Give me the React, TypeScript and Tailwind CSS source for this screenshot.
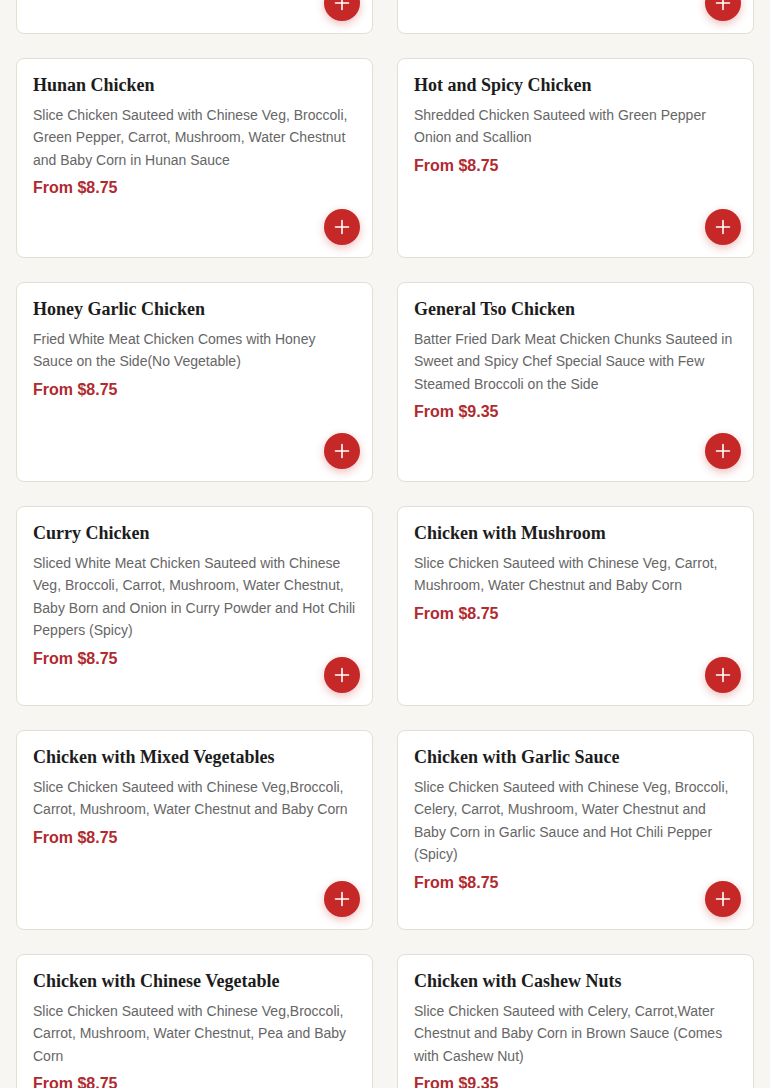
import React from 'react';

type Dish = { name: string; desc: string; price: string };

const dishes: Dish[] = [
  { name: 'Hunan Chicken', desc: 'Slice Chicken Sauteed with Chinese Veg, Broccoli, Green Pepper, Carrot, Mushroom, Water Chestnut and Baby Corn in Hunan Sauce', price: '$8.75' },
  { name: 'Hot and Spicy Chicken', desc: 'Shredded Chicken Sauteed with Green Pepper Onion and Scallion', price: '$8.75' },
  { name: 'Honey Garlic Chicken', desc: 'Fried White Meat Chicken Comes with Honey Sauce on the Side(No Vegetable)', price: '$8.75' },
  { name: 'General Tso Chicken', desc: 'Batter Fried Dark Meat Chicken Chunks Sauteed in Sweet and Spicy Chef Special Sauce with Few Steamed Broccoli on the Side', price: '$9.35' },
  { name: 'Curry Chicken', desc: 'Sliced White Meat Chicken Sauteed with Chinese Veg, Broccoli, Carrot, Mushroom, Water Chestnut, Baby Born and Onion in Curry Powder and Hot Chili Peppers (Spicy)', price: '$8.75' },
  { name: 'Chicken with Mushroom', desc: 'Slice Chicken Sauteed with Chinese Veg, Carrot, Mushroom, Water Chestnut and Baby Corn', price: '$8.75' },
  { name: 'Chicken with Mixed Vegetables', desc: 'Slice Chicken Sauteed with Chinese Veg,Broccoli, Carrot, Mushroom, Water Chestnut and Baby Corn', price: '$8.75' },
  { name: 'Chicken with Garlic Sauce', desc: 'Slice Chicken Sauteed with Chinese Veg, Broccoli, Celery, Carrot, Mushroom, Water Chestnut and Baby Corn in Garlic Sauce and Hot Chili Pepper (Spicy)', price: '$8.75' },
  { name: 'Chicken with Chinese Vegetable', desc: 'Slice Chicken Sauteed with Chinese Veg,Broccoli, Carrot, Mushroom, Water Chestnut, Pea and Baby Corn', price: '$8.75' },
  { name: 'Chicken with Cashew Nuts', desc: 'Slice Chicken Sauteed with Celery, Carrot,Water Chestnut and Baby Corn in Brown Sauce (Comes with Cashew Nut)', price: '$9.35' },
];

function AddButton() {
  return (
    <button
      type="button"
      className="absolute bottom-3 right-3 flex h-9 w-9 items-center justify-center rounded-full bg-[#c62828] text-white shadow-[0_3px_8px_rgba(198,40,40,0.3)]"
    >
      <svg width="16" height="16" viewBox="0 0 16 16" fill="none" stroke="currentColor" strokeWidth="1.6" strokeLinecap="round">
        <path d="M8 1.5v13M1.5 8h13" />
      </svg>
    </button>
  );
}

function DishCard({ dish }: { dish?: Dish }) {
  return (
    <div className="relative h-[200px] rounded-lg border border-[#e6ded2] bg-white px-4 pt-[15px]">
      {dish && (
        <>
          <h3 className="font-['Liberation_Serif',serif] text-lg font-bold leading-[22px] text-[#1c1c1c]">{dish.name}</h3>
          <p className="mt-2 font-['Liberation_Sans',Arial,sans-serif] text-sm leading-[22.4px] text-[#666]">{dish.desc}</p>
          <p className="mt-[5px] font-['Liberation_Sans',Arial,sans-serif] text-base font-bold leading-6 text-[#b02a30]">From {dish.price}</p>
        </>
      )}
      <AddButton />
    </div>
  );
}

export default function App() {
  return (
    <div className="min-h-[1088px] overflow-hidden bg-[#f8f6f2] px-4">
      <div className="-mt-[166px] grid grid-cols-2 gap-6 pb-6">
        <DishCard />
        <DishCard />
        {dishes.map((d) => (
          <DishCard key={d.name} dish={d} />
        ))}
      </div>
    </div>
  );
}
